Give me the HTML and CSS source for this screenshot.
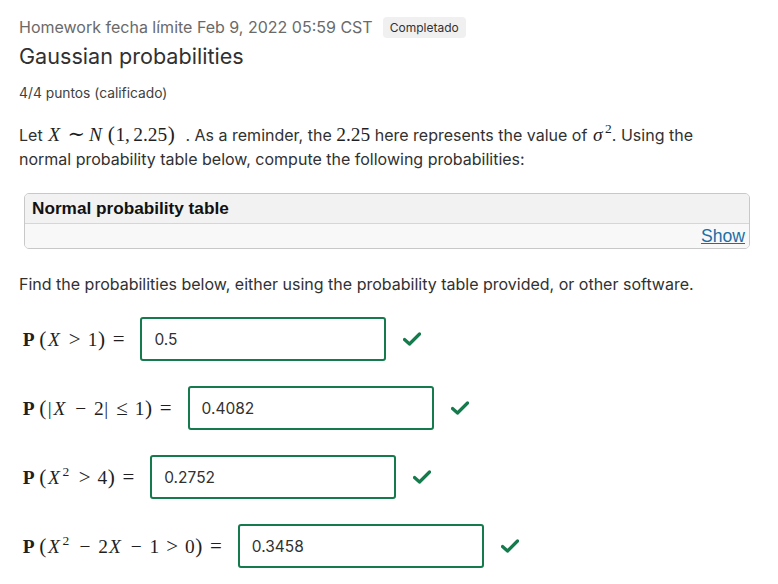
FILE: index.html
```html
<!DOCTYPE html>
<html>
<head>
<meta charset="utf-8">
<link rel="stylesheet" href="styles.css">
</head>
<body>
<div class="page">
  <div class="meta">
    <span class="due">Homework fecha límite Feb 9, 2022 05:59 CST</span>
    <span class="badge">Completado</span>
  </div>
  <h1 class="title">Gaussian probabilities</h1>
  <div class="points">4/4 puntos (calificado)</div>

  <p class="intro">Let <span class="m trail"><i>X</i><span class="rel">∼</span><i>N</i><span class="thin"></span><span class="p">(</span>1,<span class="thin"></span>2.25<span class="p">)</span></span>. As a reminder, the <span class="m">2.25</span> here represents the value of <span class="m"><i>σ</i><sup class="end">2</sup></span>. Using the normal probability table below, compute the following probabilities:</p>

  <div class="table-box">
    <div class="table-head">Normal probability table</div>
    <div class="table-foot"><a class="show" href="#">Show</a></div>
  </div>

  <p class="find">Find the probabilities below, either using the probability table provided, or other software.</p>

  <div class="rows">
    <div class="row">
      <span class="m label"><b>P</b><span class="thin"></span><span class="p">(</span><i>X</i><span class="rel">&gt;</span>1<span class="p">)</span><span class="rel">=</span></span>
      <div class="answer">0.5</div>
      <svg class="check" viewBox="0 0 18 14" width="18" height="14"><path d="M1.5 7.5 L6.5 12 L16.5 2" fill="none" stroke="#157a4c" stroke-width="3.2" stroke-linecap="round" stroke-linejoin="round"/></svg>
    </div>
    <div class="row">
      <span class="m label"><b>P</b><span class="thin"></span><span class="p">(</span><span class="bar">|</span><i>X</i><span class="bin">−</span>2<span class="bar">|</span><span class="rel">≤</span>1<span class="p">)</span><span class="rel">=</span></span>
      <div class="answer">0.4082</div>
      <svg class="check" viewBox="0 0 18 14" width="18" height="14"><path d="M1.5 7.5 L6.5 12 L16.5 2" fill="none" stroke="#157a4c" stroke-width="3.2" stroke-linecap="round" stroke-linejoin="round"/></svg>
    </div>
    <div class="row">
      <span class="m label"><b>P</b><span class="thin"></span><span class="p">(</span><i>X</i><sup>2</sup><span class="rel">&gt;</span>4<span class="p">)</span><span class="rel">=</span></span>
      <div class="answer">0.2752</div>
      <svg class="check" viewBox="0 0 18 14" width="18" height="14"><path d="M1.5 7.5 L6.5 12 L16.5 2" fill="none" stroke="#157a4c" stroke-width="3.2" stroke-linecap="round" stroke-linejoin="round"/></svg>
    </div>
    <div class="row">
      <span class="m label"><b>P</b><span class="thin"></span><span class="p">(</span><i>X</i><sup>2</sup><span class="bin">−</span>2<i>X</i><span class="bin">−</span>1<span class="rel">&gt;</span>0<span class="p">)</span><span class="rel">=</span></span>
      <div class="answer">0.3458</div>
      <svg class="check" viewBox="0 0 18 14" width="18" height="14"><path d="M1.5 7.5 L6.5 12 L16.5 2" fill="none" stroke="#157a4c" stroke-width="3.2" stroke-linecap="round" stroke-linejoin="round"/></svg>
    </div>
  </div>
</div>
</body>
</html>
```

FILE: styles.css
```css
* { box-sizing: border-box; }
html, body { margin: 0; padding: 0; background: #fff; }
body { font-family: Inter, "Noto Sans", sans-serif; color: #313131; }
.page { padding: 15px 19px 0 19px; width: 778px; }

.meta { display: flex; align-items: center; gap: 10px; height: 24px; }
.due { font-size: 16px; color: #6a6a6a; }
.badge { font-size: 12px; color: #313131; background: #f0f0f0; border-radius: 4px; padding: 3px 7px; line-height: 15px; }

.title { font-size: 21.6px; font-weight: 400; margin: 2px 0 0 0; line-height: 30px; color: #313131; }
.points { font-size: 13.8px; color: #414141; margin-top: 13px; line-height: 18px; }

.intro { font-size: 16px; line-height: 24px; margin: 20px 0 0 0; padding-right: 12px; color: #313131; }
.m { font-family: "Liberation Serif", "DejaVu Serif", serif; font-size: 19.4px; color: #1f1f1f; white-space: nowrap; }
.m.trail { margin-right: 10px; }
.m i { font-style: italic; padding: 0 0.1em 0 0.06em; }
.m b { display: inline-block; width: 0.69em; text-align: center; }
.m sup { font-size: 13.5px; line-height: 0; vertical-align: 8px; margin-left: 0.04em; margin-right: 2.5px; }
.m sup.end { margin-right: 0; }
.m .p { font-size: 1.1em; display: inline-block; width: 0.39em; text-align: center; }
.m .rel { display: inline-block; width: 15px; text-align: center; margin: 0 5.4px; font-size: 1.08em; }
.m .bin { display: inline-block; width: 15px; text-align: center; margin: 0 5.8px; }
.m .bar { display: inline-block; width: 0.28em; text-align: center; }
.m .thin { display: inline-block; width: 0.167em; }

.table-box { margin: 22px 9px 0 5px; border: 1px solid #c8c8c8; border-radius: 5px; background: #f5f5f5; overflow: hidden; font-family: "Liberation Sans", Arial, sans-serif; }
.table-head { background: #f2f2f2; border-bottom: 1px solid #d6d6d6; height: 30px; padding: 0 7px; font-weight: bold; font-size: 17.2px; line-height: 28px; color: #111; }
.table-foot { background: #f8f8f8; height: 24px; text-align: right; padding: 0 4px; line-height: 24px; font-size: 17.6px; }
.show { color: #1b6fa6; text-decoration: underline; }

.find { font-size: 16px; line-height: 22px; margin: 24px 0 0 0; color: #313131; }

.rows { display: flex; flex-direction: column; gap: 25px; margin-top: 22px; }
.row { display: flex; align-items: center; height: 44px; padding-left: 3px; }
.label { white-space: nowrap; }
.answer { width: 246px; height: 44px; border: 2px solid #157a4c; border-radius: 3px; margin-left: 9px; padding: 0 12px; display: flex; align-items: center; font-size: 15.5px; color: #313131; }
.check { margin-left: 17px; }
```
